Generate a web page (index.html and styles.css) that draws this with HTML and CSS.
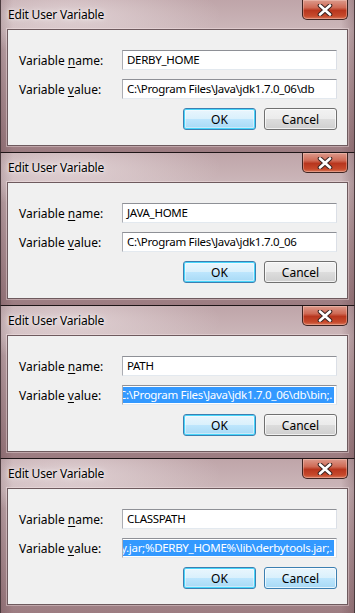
FILE: index.html
```html
<!DOCTYPE html>
<html lang="en">
<head>
    <meta charset="UTF-8">
    <meta name="viewport" content="width=device-width, initial-scale=1.0">
    <title>Edit User Variable</title>
    <link rel="stylesheet" href="styles.css">
</head>
<body>

    <div class="stack">

        <!-- DERBY_HOME -->
        <div class="dialog first">
            <div class="titlebar">
                <span class="title">Edit User Variable</span>
                <span class="close">
                    <svg width="20" height="12" viewBox="0 0 20 12"><path d="M5 1.5 L15 10.5 M15 1.5 L5 10.5" stroke="#3a2320" stroke-width="4.6" stroke-linecap="round"/><path d="M5 1.5 L15 10.5 M15 1.5 L5 10.5" stroke="#fff" stroke-width="2.6" stroke-linecap="round"/></svg>
                </span>
            </div>
            <div class="client">
                <div class="row">
                    <label>Variable <u>n</u>ame:</label>
                    <div class="field">DERBY_HOME</div>
                </div>
                <div class="row">
                    <label>Variable <u>v</u>alue:</label>
                    <div class="field">C:\Program Files\Java\jdk1.7.0_06\db</div>
                </div>
                <div class="buttons">
                    <span class="btn default">OK</span>
                    <span class="btn">Cancel</span>
                </div>
            </div>
        </div>

        <!-- JAVA_HOME -->
        <div class="dialog">
            <div class="titlebar">
                <span class="title">Edit User Variable</span>
                <span class="close">
                    <svg width="20" height="12" viewBox="0 0 20 12"><path d="M5 1.5 L15 10.5 M15 1.5 L5 10.5" stroke="#3a2320" stroke-width="4.6" stroke-linecap="round"/><path d="M5 1.5 L15 10.5 M15 1.5 L5 10.5" stroke="#fff" stroke-width="2.6" stroke-linecap="round"/></svg>
                </span>
            </div>
            <div class="client">
                <div class="row">
                    <label>Variable <u>n</u>ame:</label>
                    <div class="field">JAVA_HOME</div>
                </div>
                <div class="row">
                    <label>Variable <u>v</u>alue:</label>
                    <div class="field">C:\Program Files\Java\jdk1.7.0_06</div>
                </div>
                <div class="buttons">
                    <span class="btn default">OK</span>
                    <span class="btn">Cancel</span>
                </div>
            </div>
        </div>

        <!-- PATH -->
        <div class="dialog">
            <div class="titlebar">
                <span class="title">Edit User Variable</span>
                <span class="close">
                    <svg width="20" height="12" viewBox="0 0 20 12"><path d="M5 1.5 L15 10.5 M15 1.5 L5 10.5" stroke="#3a2320" stroke-width="4.6" stroke-linecap="round"/><path d="M5 1.5 L15 10.5 M15 1.5 L5 10.5" stroke="#fff" stroke-width="2.6" stroke-linecap="round"/></svg>
                </span>
            </div>
            <div class="client">
                <div class="row">
                    <label>Variable <u>n</u>ame:</label>
                    <div class="field">PATH</div>
                </div>
                <div class="row">
                    <label>Variable <u>v</u>alue:</label>
                    <div class="field scrolled"><span class="sel">C:\Program Files\Java\jdk1.7.0_06\db\bin;.</span></div>
                </div>
                <div class="buttons">
                    <span class="btn default">OK</span>
                    <span class="btn">Cancel</span>
                </div>
            </div>
        </div>

        <!-- CLASSPATH -->
        <div class="dialog last">
            <div class="titlebar">
                <span class="title">Edit User Variable</span>
                <span class="close">
                    <svg width="20" height="12" viewBox="0 0 20 12"><path d="M5 1.5 L15 10.5 M15 1.5 L5 10.5" stroke="#3a2320" stroke-width="4.6" stroke-linecap="round"/><path d="M5 1.5 L15 10.5 M15 1.5 L5 10.5" stroke="#fff" stroke-width="2.6" stroke-linecap="round"/></svg>
                </span>
            </div>
            <div class="client">
                <div class="row">
                    <label>Variable <u>n</u>ame:</label>
                    <div class="field">CLASSPATH</div>
                </div>
                <div class="row">
                    <label>Variable <u>v</u>alue:</label>
                    <div class="field scrolled"><span class="sel">y.jar;%DERBY_HOME%\lib\derbytools.jar;.</span></div>
                </div>
                <div class="buttons">
                    <span class="btn default">OK</span>
                    <span class="btn hover">Cancel</span>
                </div>
            </div>
        </div>

    </div>

</body>
</html>
```

FILE: styles.css
```css
body {
    margin: 0;
    padding: 0;
    background-color: #1c1416;
    font-family: "Noto Sans", "Open Sans", sans-serif;
    font-size: 12px;
    color: #000;
    overflow: hidden;
}
.stack {
    width: 355px;
    display: flex;
    flex-direction: column;
}
.dialog {
    box-sizing: border-box;
    height: 153px;
    padding: 0 6px 6px 6px;
    border-top: 1px solid #1e1517;
    border-left: 1px solid #4a3a3d;
    border-right: 1px solid #4a3a3d;
    background:
        radial-gradient(ellipse 150px 40px at 70px 14px, rgba(240, 230, 232, 0.6), rgba(240, 230, 232, 0) 100%),
        linear-gradient(to right, rgba(100, 66, 72, 0.3) 0, rgba(100, 66, 72, 0) 12px, rgba(100, 66, 72, 0) 340px, rgba(100, 66, 72, 0.3) 100%),
        linear-gradient(to bottom, #bfa5a9 0, #ccb7ba 20%, #b3989c 60%, #9c7c81 100%);
}
.dialog.first {
    margin-top: -1px;
}
.dialog.last {
    height: 156px;
}
.titlebar {
    height: 29px;
    display: flex;
    justify-content: space-between;
    align-items: flex-start;
}
.title {
    margin-top: 7px;
    margin-left: 1px;
    line-height: 16px;
    font-size: 12px;
    letter-spacing: -0.2px;
    color: #000;
    text-shadow: 0 0 6px rgba(255, 255, 255, 0.9), 0 0 3px rgba(255, 255, 255, 0.8);
}
.close {
    box-sizing: border-box;
    width: 46px;
    height: 20px;
    display: flex;
    align-items: center;
    justify-content: center;
    border: 1px solid #3e2422;
    border-top: none;
    border-radius: 0 0 5px 5px;
    background: linear-gradient(to bottom, #dc9a8c 0, #cf6a55 40%, #b8361e 55%, #c74a2c 85%, #d77a5f 100%);
    box-shadow: inset 0 0 0 1px rgba(255, 220, 210, 0.35);
}
.close svg {
    display: block;
}
.client {
    box-sizing: border-box;
    height: 117px;
    padding: 20px 10px 0 11px;
    background-color: #f0f0f0;
    border: 1px solid #6e5a5e;
    box-shadow: 0 0 0 1px rgba(255, 240, 242, 0.35);
}
.row {
    display: flex;
    align-items: center;
    height: 20px;
    margin-bottom: 9px;
}
.row label {
    width: 103px;
    flex: none;
    font-size: 12px;
}
.row label u {
    text-decoration-thickness: 1px;
    text-underline-offset: 2px;
}
.field {
    box-sizing: border-box;
    flex: 1;
    min-width: 0;
    height: 20px;
    padding: 1px 4px;
    line-height: 16px;
    font-size: 11.5px;
    letter-spacing: -0.3px;
    background-color: #fff;
    border: 1px solid #abadb3;
    border-top-color: #8e9096;
    border-right-color: #dbdfe6;
    border-bottom-color: #e3e9ef;
    white-space: nowrap;
    overflow: hidden;
}
.field.scrolled {
    display: flex;
    justify-content: flex-end;
    padding: 1px 2px;
}
.sel {
    flex: none;
    padding-right: 2px;
    background-color: #3399ff;
    color: #fff;
}
.buttons {
    display: flex;
    justify-content: flex-end;
    gap: 8px;
    margin-top: 4px;
}
.btn {
    box-sizing: border-box;
    width: 73px;
    height: 22px;
    display: flex;
    align-items: center;
    justify-content: center;
    border: 1px solid #707070;
    border-radius: 3px;
    background: linear-gradient(to bottom, #f2f2f2 0, #ebebeb 50%, #dddddd 50%, #cfcfcf 100%);
    box-shadow: inset 0 0 0 1px rgba(255, 255, 255, 0.7);
}
.btn.default {
    border-color: #3c7fb1;
    background: linear-gradient(to bottom, #eaf6fd 0, #d9f0fc 50%, #bee6fd 50%, #a7d9f5 100%);
    box-shadow: inset 0 0 0 1px #48d6fb, inset 0 0 0 2px rgba(255, 255, 255, 0.4);
}
.btn.hover {
    border-color: #3c7fb1;
    background: linear-gradient(to bottom, #eaf6fd 0, #d9f0fc 50%, #bee6fd 50%, #a7d9f5 100%);
}
```
